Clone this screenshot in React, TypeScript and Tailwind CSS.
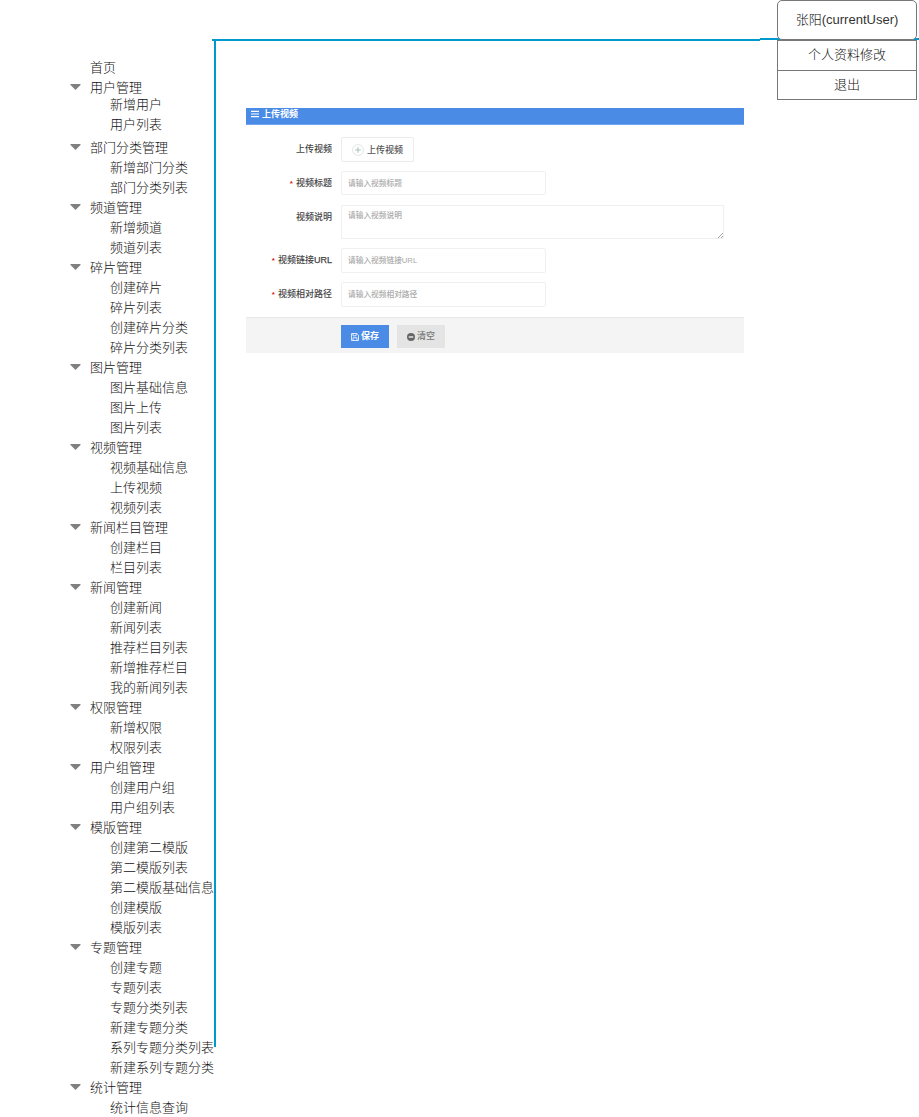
import type { ReactNode } from "react";

type Group = { title: string; items: string[]; first?: boolean };

const groups: Group[] = [
  { title: "用户管理", items: ["新增用户", "用户列表"], first: true },
  { title: "部门分类管理", items: ["新增部门分类", "部门分类列表"] },
  { title: "频道管理", items: ["新增频道", "频道列表"] },
  { title: "碎片管理", items: ["创建碎片", "碎片列表", "创建碎片分类", "碎片分类列表"] },
  { title: "图片管理", items: ["图片基础信息", "图片上传", "图片列表"] },
  { title: "视频管理", items: ["视频基础信息", "上传视频", "视频列表"] },
  { title: "新闻栏目管理", items: ["创建栏目", "栏目列表"] },
  { title: "新闻管理", items: ["创建新闻", "新闻列表", "推荐栏目列表", "新增推荐栏目", "我的新闻列表"] },
  { title: "权限管理", items: ["新增权限", "权限列表"] },
  { title: "用户组管理", items: ["创建用户组", "用户组列表"] },
  { title: "模版管理", items: ["创建第二模版", "第二模版列表", "第二模版基础信息", "创建模版", "模版列表"] },
  { title: "专题管理", items: ["创建专题", "专题列表", "专题分类列表", "新建专题分类", "系列专题分类列表", "新建系列专题分类"] },
  { title: "统计管理", items: ["统计信息查询"] },
];

function Sidebar() {
  return (
    <nav className="w-[214px] shrink-0 pt-[57px] text-[13px] leading-[22px] font-light whitespace-nowrap text-[#111]">
      <div className="h-5 pl-[90px]">首页</div>
      {groups.map((g) => (
        <section key={g.title}>
          <div className="flex h-5 pl-[70px]">
            <svg className="mt-[7px] mr-[9px] h-[6px] w-[11px]" viewBox="0 0 11 6">
              <path d="M0.5 0H10.5V1L5.5 6L0.5 1Z" fill="#808080" />
            </svg>
            <span>{g.title}</span>
          </div>
          <ul className={g.first ? "-mt-[3px] mb-[3px] pl-[110px]" : "pl-[110px]"}>
            {g.items.map((i) => (
              <li key={i} className="h-5">{i}</li>
            ))}
          </ul>
        </section>
      ))}
    </nav>
  );
}

function UserMenu() {
  return (
    <div className="absolute top-0 left-[777px] w-[140px] text-center text-[13px] font-light text-[#111]">
      <div className="h-[40px] rounded-[5px] border border-[#777] bg-white leading-[38px]">
        张阳<span className="font-normal text-[#333]">(currentUser)</span>
      </div>
      <div className="h-[31px] border border-[#777] bg-white leading-[28px]">个人资料修改</div>
      <div className="h-[29px] border border-t-0 border-[#777] bg-white leading-[27px]">退出</div>
    </div>
  );
}

function Row({ label, required, className, children }: { label: ReactNode; required?: boolean; className: string; children: ReactNode }) {
  return (
    <div className={`flex ${className}`}>
      <div className="mr-[9px] flex h-[25px] w-[86px] shrink-0 items-center justify-end text-[9px] leading-none font-medium text-[#444]">
        {required && <span className="mr-[3px] text-[8px] font-bold text-[#e02222]">*</span>}
        <span>{label}</span>
      </div>
      {children}
    </div>
  );
}

const field = "block w-[205px] rounded-[2px] border border-[#f0f0f0] px-[6px] text-[7.7px] leading-none font-medium outline-none placeholder:text-[#aaa]";

function UploadForm() {
  return (
    <form className="mt-[67px] ml-[30px] h-[245px] w-[498px]">
      <div className="flex h-[17px] items-start border-b border-[#6fa4ee] bg-[#4a8be6] pt-[2px] pl-[5px] text-[9px] leading-[9px] font-bold text-white">
        <svg className="mr-[3px] h-[8px] w-[8px]" viewBox="0 0 8 8">
          <path d="M0 1.3H8M0 4H8M0 6.7H8" stroke="white" strokeWidth="1.2" />
        </svg>
        上传视频
      </div>
      <Row label="上传视频" className="mt-[12px] h-[25px]">
        <button type="button" className="flex h-[25px] w-[73px] items-center rounded-[2px] border border-[#ececec] pt-px pl-[10px] text-[9px] leading-none font-medium text-[#555]">
          <svg className="mr-[3px] h-[12px] w-[12px]" viewBox="0 0 12 12" fill="none">
            <circle cx="6" cy="6" r="5.4" stroke="#ddd" strokeWidth="0.8" />
            <path d="M3.2 6H8.8M6 3.2V8.8" stroke="#9dbbae" strokeWidth="0.9" />
          </svg>
          上传视频
        </button>
      </Row>
      <Row label="视频标题" required className="mt-[9px] h-[24px]">
        <input className={`${field} h-[24px]`} placeholder="请输入视频标题" />
      </Row>
      <Row label="视频说明" className="mt-[10px] h-[34px]">
        <div className="relative h-[34px] w-[383px]">
          <textarea
            className="block h-[34px] w-[383px] resize-none border border-[#f0f0f0] px-[6px] pt-[6px] text-[7.7px] leading-[8px] font-medium outline-none placeholder:text-[#aaa]"
            placeholder="请输入视频说明"
          />
          <svg className="absolute right-[1px] bottom-[1px] h-[5px] w-[5px]" viewBox="0 0 5 5">
            <path d="M0 5L5 0M3 5L5 3" stroke="#999" strokeWidth="0.9" />
          </svg>
        </div>
      </Row>
      <Row
        label={<>视频链接<span className="[-webkit-text-stroke:0.25px_#444]">URL</span></>}
        required
        className="mt-[9px] h-[25px]"
      >
        <input className={`${field} h-[25px]`} placeholder="请输入视频链接URL" />
      </Row>
      <Row label="视频相对路径" required className="mt-[9px] h-[25px]">
        <input className={`${field} h-[25px]`} placeholder="请输入视频相对路径" />
      </Row>
      <div className="mt-[10px] flex h-[36px] gap-[8px] border-t border-[#e8e8e8] bg-[#f4f4f4] pt-[7px] pl-[95px] text-[9px] leading-none font-medium">
        <button type="button" className="flex h-[23px] w-[48px] items-center justify-center bg-[#4a8be6] font-bold text-white">
          <svg className="mr-[2px] h-[8px] w-[8px]" viewBox="0 0 8 8" fill="none" stroke="white" strokeWidth="0.8">
            <path d="M0.5 0.5H5.8L7.5 2.2V7.5H0.5ZM2 0.5V2.8H5.2V0.5M2 7.5V4.8H6V7.5" />
          </svg>
          保存
        </button>
        <button type="button" className="flex h-[23px] w-[48px] items-center justify-center bg-[#e4e4e4] text-[#777]">
          <svg className="mr-[2px] h-[8px] w-[8px]" viewBox="0 0 8 8">
            <circle cx="4" cy="4" r="4" fill="#666" />
            <path d="M1.7 4H6.3" stroke="#eee" strokeWidth="1.4" />
          </svg>
          清空
        </button>
      </div>
    </form>
  );
}

export default function App() {
  return (
    <div className="relative flex h-[1117px] w-[919px] overflow-hidden bg-white font-['Liberation_Sans','Noto_Sans_CJK_SC',sans-serif]">
      <Sidebar />
      <main className="w-[705px] pt-[38px]">
        <div className="-ml-[2px] flex h-[3px]">
          <div className="mt-px h-[2px] w-[548px] bg-[#0099cc]" />
          <div className="h-[2px] flex-1 bg-[#0099cc]" />
        </div>
        <div className="h-[1006px] border-l-2 border-[#0099cc]">
          <div className="flow-root">
            <UploadForm />
          </div>
        </div>
      </main>
      <UserMenu />
    </div>
  );
}
